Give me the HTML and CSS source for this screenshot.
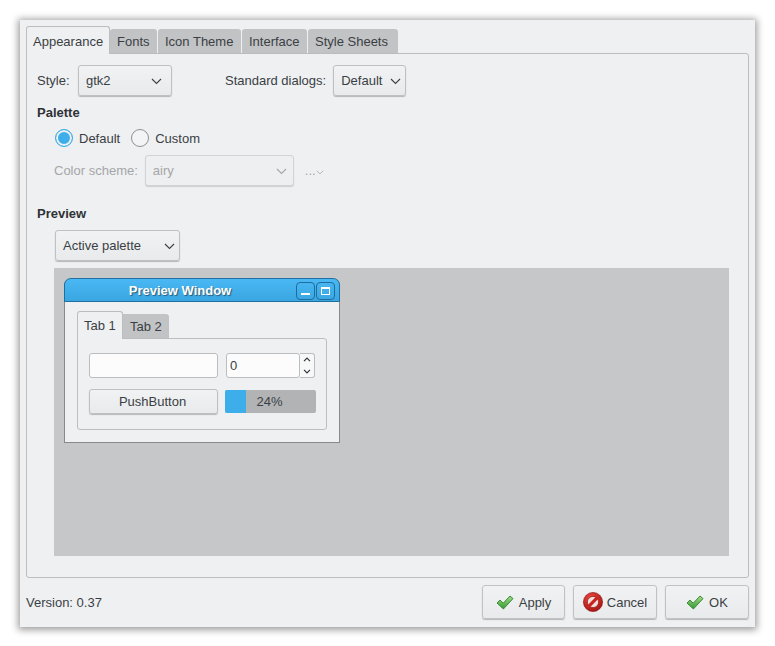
FILE: index.html
```html
<!DOCTYPE html>
<html lang="en">
<head>
<meta charset="utf-8">
<title>Appearance</title>
<link rel="stylesheet" href="styles.css">
</head>
<body>
<svg class="defs" width="0" height="0" aria-hidden="true">
  <defs>
    <linearGradient id="chk" x1="0" y1="0" x2="0" y2="1">
      <stop offset="0" stop-color="#a5dc8c"/>
      <stop offset="1" stop-color="#2f9a2c"/>
    </linearGradient>
    <radialGradient id="red" cx="0.4" cy="0.3" r="0.8">
      <stop offset="0" stop-color="#ec4a40"/>
      <stop offset="1" stop-color="#a00e0e"/>
    </radialGradient>
    <symbol id="check" viewBox="0 0 18 15">
      <path d="M1 8 L4 5 L7.2 8.2 L14 1 L17 3.6 L7.4 14 Z" fill="url(#chk)" stroke="#3f8a3a" stroke-width="1" stroke-linejoin="round"/>
    </symbol>
    <symbol id="chev" viewBox="0 0 11 7">
      <path d="M1 1 L5.5 5.5 L10 1" fill="none" stroke="currentColor" stroke-width="1.1"/>
    </symbol>
    <symbol id="chev-bold" viewBox="0 0 8 5">
      <path d="M1 0.8 L4 3.8 L7 0.8" fill="none" stroke="currentColor" stroke-width="1.2"/>
    </symbol>
  </defs>
</svg>
<main class="window">
  <nav class="tabs">
    <span class="tab active">Appearance</span>
    <span class="tab tab-fonts">Fonts</span>
    <span class="tab tab-icon">Icon Theme</span>
    <span class="tab tab-iface">Interface</span>
    <span class="tab tab-sheets">Style Sheets</span>
  </nav>
  <section class="pane">
    <div class="row style-row">
      <label class="lbl lbl-style">Style:</label>
      <div class="combo combo-style"><span>gtk2</span><svg class="chev"><use href="#chev"/></svg></div>
      <label class="lbl lbl-dialogs">Standard dialogs:</label>
      <div class="combo combo-dialogs"><span>Default</span><svg class="chev"><use href="#chev"/></svg></div>
    </div>
    <h2 class="group-title palette-title">Palette</h2>
    <div class="row radio-row">
      <span class="radio on"></span><span class="radio-text">Default</span>
      <span class="radio"></span><span>Custom</span>
    </div>
    <div class="row scheme-row disabled">
      <label class="lbl">Color scheme:</label>
      <div class="combo combo-scheme"><span>airy</span><svg class="chev"><use href="#chev"/></svg></div>
      <span class="more">...<svg class="chev small"><use href="#chev"/></svg></span>
    </div>
    <h2 class="group-title preview-title">Preview</h2>
    <div class="combo combo-palette"><span>Active palette</span><svg class="chev"><use href="#chev"/></svg></div>
    <div class="canvas">
      <div class="pwin">
        <header class="ptitle">
          <span class="ptitle-text">Preview Window</span>
          <span class="wbtn"><i class="wmin"></i></span>
          <span class="wbtn"><i class="wmax"></i></span>
        </header>
        <div class="pbody">
          <div class="ptabs">
            <span class="ptab active">Tab 1</span>
            <span class="ptab">Tab 2</span>
          </div>
          <div class="ppane">
            <div class="pinput"></div>
            <div class="spin">
              <div class="spin-field">0</div>
              <div class="spin-arrows">
                <svg class="spin-up"><use href="#chev-bold"/></svg>
                <svg class="spin-down"><use href="#chev-bold"/></svg>
              </div>
            </div>
            <div class="pushbtn">PushButton</div>
            <div class="progress"><div class="progress-fill" style="width:21px"></div><span class="progress-text">24%</span></div>
          </div>
        </div>
      </div>
    </div>
  </section>
  <footer class="bottom">
    <span class="version">Version: 0.37</span>
    <button class="btn btn-apply"><svg class="ico-check"><use href="#check"/></svg>Apply</button>
    <button class="btn btn-cancel">
      <svg class="ico-cancel" viewBox="0 0 20 20"><circle cx="10" cy="10" r="9.6" fill="url(#red)" stroke="#8a0c0c" stroke-width="0.6"/><circle cx="10" cy="10" r="5.6" fill="#f2dedb" stroke="#7d0b0b" stroke-width="0.6"/><path d="M4.6 13.2 L13.2 4.6 L15.4 6.8 L6.8 15.4 Z" fill="#c9201d"/></svg>Cancel</button>
    <button class="btn btn-ok"><svg class="ico-check"><use href="#check"/></svg>OK</button>
  </footer>
</main>
</body>
</html>
```
FILE: styles.css
```css
* { box-sizing: border-box; }
html, body { margin: 0; height: 100%; }
body {
  background: #fff;
  padding: 20px 0 0 20px;
  font: 13px/15px "Liberation Sans", Arial, sans-serif;
  color: #3a3f44;
  overflow: hidden;
}
.defs { position: absolute; }
.window {
  width: 735px;
  height: 607px;
  background: #eff0f2;
  padding: 6px 6px 0;
  box-shadow: 0 1px 7px 2px rgba(0,0,0,.38);
}
.tabs { display: flex; align-items: flex-end; height: 28px; position: relative; z-index: 1; margin-bottom: -1px; }
.tab {
  height: 25px;
  padding: 5px 0 0 7px;
  margin-right: 1px;
  background: #c2c3c5;
  border-radius: 3px 3px 0 0;
  border-bottom: 1px solid #bbbcbe;
}
.tab.active {
  width: 84px;
  height: 28px;
  padding: 7px 0 0 6px;
  margin-right: 0;
  background: #eff0f2;
  border: 1px solid #bcbdbf;
  border-bottom: 0;
}
.tab-fonts { width: 47px; }
.tab-icon { width: 83px; }
.tab-iface { width: 65px; }
.tab-sheets { width: 90px; margin-right: 0; }
.pane {
  height: 525px;
  border: 1px solid #bcbdbf;
  border-radius: 0 3px 3px 3px;
  padding: 11px 19px 0 10px;
}
.row { display: flex; align-items: center; }
.lbl-style { width: 34px; }
.lbl-dialogs { margin-left: 53px; }
.combo {
  display: flex;
  align-items: center;
  justify-content: space-between;
  height: 31px;
  padding: 0 9px 0 7px;
  border: 1px solid #bfc0c2;
  border-radius: 3px;
  background: linear-gradient(#f1f2f3, #e9eaec);
  box-shadow: 0 1px 1px #b5b6b8;
}
.chev { width: 11px; height: 7px; margin-top: 2px; }
.combo-style { width: 94px; margin-left: 7px; }
.combo-dialogs { width: 73px; margin-left: 7px; padding-right: 4px; }
.group-title { margin: 0; font-size: 13px; line-height: 15px; font-weight: bold; color: #2e3236; }
.palette-title { margin-top: 9px; }
.radio-row { margin: 9px 0 0 18px; height: 18px; }
.radio {
  width: 18px;
  height: 18px;
  border-radius: 50%;
  border: 1px solid #8f9092;
  background: #f3f4f5;
  margin-right: 6px;
}
.radio.on {
  background: #3daee9;
  border: 1px solid #3daee9;
  box-shadow: inset 0 0 0 2px #eff0f2;
}
.radio-text { margin-right: 11px; }
.scheme-row { margin: 8px 0 0 17px; }
.disabled { color: #a5a6a8; }
.combo-scheme {
  width: 149px;
  margin-left: 7px;
  color: #a5a6a8;
  background: #eeeff0;
  border-color: #d2d3d5;
  box-shadow: 0 1px 1px #cdced0;
  padding-right: 6px;
}
.more { display: flex; align-items: center; margin-left: 11px; }
.chev.small { width: 8px; height: 5px; margin-top: 4px; }
.preview-title { margin-top: 20px; }
.combo-palette { width: 125px; margin: 9px 0 0 18px; padding-right: 4px; }
.canvas {
  width: 675px;
  height: 288px;
  margin: 7px 0 0 17px;
  background: #c6c7c9;
  padding: 10px;
}
.pwin {
  width: 276px;
  height: 165px;
  border: 1px solid #88898b;
  border-top: 0;
  border-radius: 7px 7px 0 0;
  background: #eff0f2;
}
.ptitle {
  height: 24px;
  margin: 0 -1px;
  display: flex;
  align-items: center;
  padding: 0 4px 0 0;
  gap: 1px;
  border: 1px solid #1f6f9f;
  border-radius: 7px 7px 0 0;
  background: linear-gradient(#4ab8f4, #39a6e1);
}
.ptitle-text {
  flex: 1;
  text-align: center;
  font-weight: bold;
  color: #fff;
  text-shadow: 1px 1px 1px #2a5a78;
}
.wbtn {
  display: flex;
  align-items: center;
  justify-content: center;
  width: 19px;
  height: 18px;
  margin-top: 1px;
  border: 1px solid #1e6d9d;
  border-radius: 4px;
}
.wmin { display: block; width: 9px; height: 2px; background: #fff; margin-top: 6px; }
.wmax { display: block; width: 9px; height: 8px; border: 2px solid #fff; border-width: 2px 1px 1px; }
.pbody { padding: 9px 9px 0 12px; }
.ptabs { display: flex; align-items: flex-end; height: 28px; margin-bottom: -1px; position: relative; z-index: 1; }
.ptab {
  width: 46px;
  height: 25px;
  padding: 5px 0 0 7px;
  background: #c2c3c5;
  border-radius: 0 3px 0 0;
  border-bottom: 1px solid #bbbcbe;
}
.ptab.active {
  height: 28px;
  padding: 6px 0 0 6px;
  background: #eff0f2;
  border: 1px solid #bcbdbf;
  border-bottom: 0;
  border-radius: 3px 3px 0 0;
}
.ppane {
  width: 250px;
  height: 92px;
  border: 1px solid #bcbdbf;
  border-radius: 0 3px 3px 3px;
  padding: 14px 11px 0;
  display: grid;
  grid-template-columns: 129px 89px;
  grid-template-rows: 25px 25px;
  column-gap: 8px;
  row-gap: 11px;
}
.pinput {
  background: #fcfcfc;
  border: 1px solid #bcbdbf;
  border-radius: 3px;
}
.spin { display: flex; }
.spin-field {
  width: 74px;
  padding: 4px 3px;
  background: #fcfcfc;
  border: 1px solid #bcbdbf;
  border-radius: 3px;
}
.spin-arrows {
  width: 15px;
  border: 1px solid #bcbdbf;
  border-left: 0;
  border-radius: 0 3px 3px 0;
  background: #f7f8f8;
  color: #31363b;
  display: flex;
  flex-direction: column;
  align-items: center;
  justify-content: center;
  gap: 7px;
}
.spin-arrows svg { width: 8px; height: 5px; display: block; }
.spin-up { transform: scaleY(-1); }
.pushbtn {
  padding-right: 2px;
  text-align: center;
  line-height: 23px;
  border: 1px solid #bfc0c2;
  border-radius: 3px;
  background: linear-gradient(#f1f2f3, #e9eaec);
  box-shadow: 0 1px 1px #b5b6b8;
}
.progress {
  position: relative;
  width: 91px;
  height: 23px;
  margin: 1px 0 0 -1px;
  padding-right: 2px;
  background: #b2b3b5;
  border-radius: 2px;
  overflow: hidden;
  text-align: center;
  line-height: 23px;
}
.progress-fill { position: absolute; left: 0; top: 0; bottom: 0; background: #3daee9; }
.progress-text { position: relative; }
.bottom { display: flex; align-items: center; height: 49px; padding-bottom: 1px; }
.version { flex: 1; }
.btn {
  display: flex;
  align-items: center;
  justify-content: center;
  gap: 4px;
  height: 34px;
  margin-left: 8px;
  padding: 0;
  font: inherit;
  color: inherit;
  border: 1px solid #c1c2c4;
  border-radius: 3px;
  background: linear-gradient(#f1f2f3, #e9eaec);
  box-shadow: 0 1px 1px #b5b6b8;
}
.btn-apply { width: 83px; gap: 5px; }
.btn-cancel { width: 84px; }
.btn-ok { width: 84px; gap: 5px; }
.ico-check { width: 18px; height: 15px; }
.ico-cancel { width: 20px; height: 20px; }
```
